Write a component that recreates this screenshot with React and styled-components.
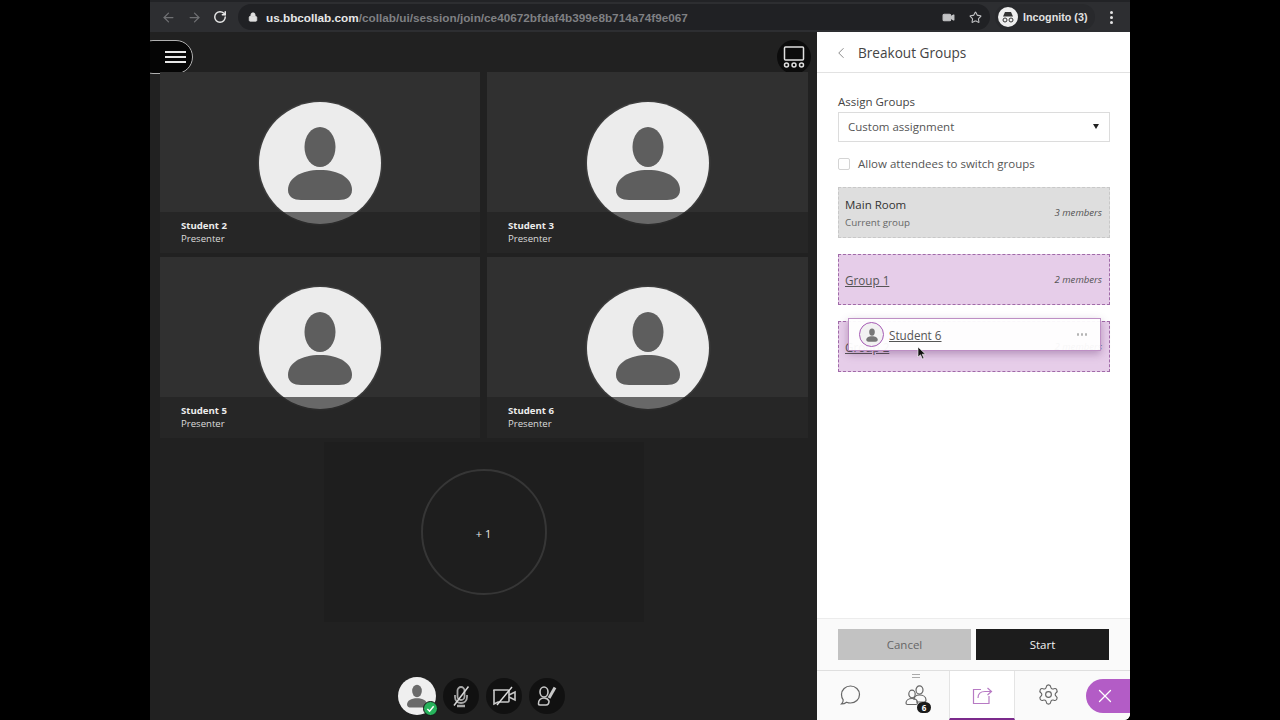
import React from 'react';
import styled, { createGlobalStyle } from 'styled-components';
import { ArrowLeft, ArrowRight, RotateCw, Lock, Video, Star, ChevronLeft, Settings, X } from 'lucide-react';

const Global = createGlobalStyle`
  html, body { margin: 0; padding: 0; background: #000; height: 100%; overflow: hidden; }
  #root { height: 100%; }
  * { box-sizing: border-box; }
  body { font-family: "Open Sans", "Liberation Sans", sans-serif; }
`;

const Stage = styled.div`
  width: 980px;
  height: 720px;
  margin: 0 auto;
  display: flex;
  flex-direction: column;
  background: #212121;
  border-bottom-right-radius: 6px;
  overflow: hidden;
`;

const BrowserBar = styled.div`
  height: 32px;
  flex: none;
  display: flex;
  align-items: center;
  padding: 0 0 0 5px;
  background: #2d2e31;
  border-top: 2px solid #222326;
  font-family: "Liberation Sans", sans-serif;
`;

const NavButton = styled.div`
  width: 26px;
  height: 26px;
  display: flex;
  align-items: center;
  justify-content: center;
  color: ${p => (p.$on ? '#e8e8e8' : '#6f7073')};
`;

const Omnibox = styled.div`
  margin-left: 5px;
  width: 752px;
  height: 26px;
  border-radius: 13px;
  background: #202124;
  display: flex;
  align-items: center;
  padding: 0 1px 0 10px;
  font-size: 11.75px;
  font-weight: 700;
  color: #7f8083;
  white-space: nowrap;
`;

const Host = styled.span`
  color: #e6e7e7;
`;

const Url = styled.div`
  margin-left: 8px;
  flex: 1;
`;

const OmniIcon = styled.div`
  width: 27px;
  display: flex;
  justify-content: center;
  color: #c2c3c5;
`;

const Chip = styled.div`
  margin-left: 5px;
  width: 100px;
  height: 26px;
  border-radius: 13px;
  background: #28292c;
  display: flex;
  align-items: center;
  gap: 5px;
  padding-left: 3px;
  font-size: 10.75px;
  font-weight: 700;
  color: #e2e2e2;
  white-space: nowrap;
`;

const ChipFace = styled.div`
  width: 20px;
  height: 20px;
  border-radius: 50%;
  background: #eeeeee;
  display: flex;
  align-items: center;
  justify-content: center;
`;

const Dots = styled.div`
  margin-left: 15px;
  display: flex;
  flex-direction: column;
  gap: 2px;
  span { width: 3px; height: 3px; border-radius: 50%; background: #e4e4e4; display: block; }
`;

const Body = styled.div`
  flex: 1;
  display: flex;
  min-height: 0;
`;

const Session = styled.div`
  position: relative;
  width: 667px;
  display: flex;
  flex-direction: column;
  padding: 40px 9px 5px 10px;
`;

const MenuButton = styled.div`
  position: absolute;
  left: -14px;
  top: 8px;
  width: 57px;
  height: 34px;
  border-radius: 17px;
  background: #050505;
  border: 1.5px solid #b0b0b0;
  display: flex;
  flex-direction: column;
  align-items: flex-end;
  justify-content: center;
  gap: 3px;
  padding-right: 6px;
  span { width: 21px; height: 2px; background: #e6e6e6; display: block; }
`;

const ViewButton = styled.div`
  position: absolute;
  left: 627px;
  top: 8px;
  width: 34px;
  height: 34px;
  border-radius: 50%;
  background: #0c0c0c;
  display: flex;
  align-items: center;
  justify-content: center;
`;

const TileGrid = styled.div`
  display: grid;
  grid-template-columns: 320px 321px;
  grid-auto-rows: 181px;
  column-gap: 7px;
  row-gap: 4px;
`;

const Tile = styled.div`
  position: relative;
  background: #303030;
  display: flex;
  justify-content: center;
  padding-top: 30px;
  overflow: hidden;
`;

const Avatar = styled.div`
  width: 122px;
  height: 122px;
  border-radius: 50%;
  background: #ececec;
  box-shadow: 0 0 0 1.5px #3d3d3d;
`;

const TileInfo = styled.div`
  position: absolute;
  left: 0;
  right: 0;
  bottom: 0;
  height: 41px;
  padding: 7px 0 0 21px;
  background: rgba(34, 34, 34, 0.65);
  color: #dcdcdc;
  font-size: 9.6px;
  line-height: 13px;
`;

const TileName = styled.div`
  font-weight: 700;
  color: #ececec;
`;

const OverflowRow = styled.div`
  display: flex;
  justify-content: center;
  margin-top: 4px;
  padding-right: 1px;
`;

const OverflowTile = styled.div`
  width: 320px;
  height: 180px;
  background: #1e1e1e;
  display: flex;
  align-items: center;
  justify-content: center;
`;

const OverflowCircle = styled.div`
  width: 126px;
  height: 126px;
  border-radius: 50%;
  border: 2px solid #363636;
  display: flex;
  align-items: center;
  justify-content: center;
  color: #e8e8e8;
  font-size: 11px;
  padding-top: 2px;
`;

const Controls = styled.div`
  margin-top: auto;
  display: flex;
  justify-content: center;
  align-items: center;
  gap: 7px;
  padding-right: 5px;
  height: 38px;
`;

const SelfButton = styled.div`
  position: relative;
  width: 38px;
  height: 38px;
  border-radius: 50%;
  background: #efefef;
  display: flex;
  align-items: center;
  justify-content: center;
`;

const Check = styled.div`
  position: absolute;
  right: -2px;
  bottom: -1px;
  width: 15px;
  height: 15px;
  border-radius: 50%;
  background: #27b35c;
  border: 1.5px solid #151515;
  display: flex;
  align-items: center;
  justify-content: center;
`;

const RoundButton = styled.div`
  width: 36px;
  height: 36px;
  border-radius: 50%;
  background: #111111;
  display: flex;
  align-items: center;
  justify-content: center;
`;

const Panel = styled.div`
  width: 313px;
  background: #fff;
  display: flex;
  flex-direction: column;
  color: #333;
`;

const PanelHeader = styled.div`
  height: 41px;
  flex: none;
  display: flex;
  align-items: center;
  gap: 8px;
  padding: 1px 0 0 15px;
  border-bottom: 1px solid #e2e2e2;
  font-size: 13.6px;
  font-weight: 500;
  color: #444;
`;

const PanelBody = styled.div`
  flex: 1;
  padding: 21px 20px 0 21px;
  position: relative;
`;

const FieldLabel = styled.div`
  font-size: 11.5px;
  font-weight: 500;
  line-height: 16px;
  color: #444;
`;

const SelectBox = styled.div`
  margin-top: 2px;
  height: 30px;
  border: 1px solid #dcdcdc;
  display: flex;
  align-items: center;
  justify-content: space-between;
  padding: 0 10px 1px 9px;
  font-size: 11.5px;
  color: #555;
`;

const Caret = styled.div`
  width: 0;
  height: 0;
  border-left: 3.5px solid transparent;
  border-right: 3.5px solid transparent;
  border-top: 5px solid #222;
`;

const CheckRow = styled.div`
  margin-top: 15px;
  display: flex;
  align-items: center;
  gap: 8px;
  font-size: 11.5px;
  line-height: 12px;
  color: #555;
  height: 14px;
`;

const CheckBox = styled.div`
  width: 12px;
  height: 12px;
  border: 1px solid #d4d4d4;
  border-radius: 2px;
`;

const Groups = styled.div`
  margin-top: 16px;
  display: flex;
  flex-direction: column;
  gap: 16px;
`;

const GroupCard = styled.div`
  height: 51px;
  border: 1px dashed ${p => (p.$tint ? '#a06aa8' : '#c8c8c8')};
  background: ${p => (p.$tint ? '#e6cde9' : '#dedede')};
  display: flex;
  align-items: center;
  justify-content: space-between;
  padding: 0 7px 0 6px;
`;

const GroupName = styled.div`
  font-size: 11.5px;
  font-weight: 500;
  line-height: 17px;
  margin-bottom: 3px;
  color: #333;
`;

const GroupNote = styled.div`
  font-size: 9.8px;
  line-height: 14px;
  color: #666;
`;

const GroupLink = styled.div`
  font-size: 11.7px;
  color: #555;
  text-decoration: underline;
`;

const Members = styled.div`
  font-size: 9.6px;
  font-style: italic;
  color: #555;
`;

const DragCard = styled.div`
  position: absolute;
  left: 31px;
  top: 245px;
  width: 253px;
  height: 33px;
  background: rgba(255, 255, 255, 0.95);
  border: 1px solid #bd8fc4;
  box-shadow: 0 3px 8px rgba(90, 40, 100, 0.35);
  display: flex;
  align-items: center;
  padding: 0 13px 0 10px;
  gap: 5px;
`;

const DragAvatar = styled.div`
  width: 25px;
  height: 25px;
  border-radius: 50%;
  border: 1.5px solid #a65bb5;
  display: flex;
  align-items: center;
  justify-content: center;
  background: #f2f2f2;
`;

const DragName = styled.div`
  flex: 1;
  font-size: 11.7px;
  font-weight: 500;
  color: #555;
  text-decoration: underline;
`;

const MoreDots = styled.div`
  display: flex;
  gap: 1.5px;
  span { width: 2.5px; height: 2.5px; border-radius: 50%; background: #b4b4b4; display: block; }
`;

const Cursor = styled.svg`
  position: absolute;
  left: 100px;
  top: 273px;
`;

const Footer = styled.div`
  flex: none;
  height: 53px;
  background: #fafafa;
  border-top: 1px solid #ececec;
  border-bottom: 1px solid #dfdfdf;
  display: flex;
  gap: 5px;
  padding: 10px 21px 0 21px;
`;

const FootButton = styled.div`
  width: 133px;
  height: 31px;
  display: flex;
  align-items: center;
  justify-content: center;
  font-size: 11.5px;
  font-weight: 500;
  background: ${p => (p.$dark ? '#1c1c1c' : '#c2c2c2')};
  color: ${p => (p.$dark ? '#f2f2f2' : '#666')};
`;

const Tabs = styled.div`
  flex: none;
  height: 49px;
  display: flex;
  align-items: stretch;
  background: #fafafa;
`;

const Tab = styled.div`
  position: relative;
  width: 66px;
  display: flex;
  align-items: center;
  justify-content: center;
  padding-bottom: 2px;
  ${p => p.$active && `
    background: #fff;
    border-left: 1px solid #e4e4e4;
    border-right: 1px solid #e4e4e4;
    border-bottom: 2px solid #7b2a8c;
    padding-bottom: 0;
  `}
`;

const Grip = styled.div`
  position: absolute;
  top: 3px;
  left: 50%;
  margin-left: -4px;
  width: 8px;
  height: 4px;
  border-top: 1px solid #aaa;
  border-bottom: 1px solid #aaa;
`;

const Count = styled.div`
  position: absolute;
  left: 34px;
  top: 31px;
  width: 14px;
  height: 11px;
  border-radius: 6px;
  background: #1a1a1a;
  color: #fff;
  font-size: 8px;
  font-weight: 700;
  line-height: 11px;
  text-align: center;
`;

const CloseTab = styled.div`
  margin: 8px 0 7px auto;
  width: 44px;
  height: 34px;
  border-radius: 17px 0 0 17px;
  background: #b35cc6;
  color: #fff;
  display: flex;
  align-items: center;
  justify-content: center;
  padding-right: 6px;
`;

const Person = ({ size = 122, fill = '#5e5e5e' }) => (
  <svg width={size} height={size} viewBox="0 0 122 122">
    <ellipse cx="61" cy="45" rx="15.5" ry="20" fill={fill} />
    <path d="M61 68C80 68 93 76 93 88C93 95 87 98 80 98H42C35 98 29 95 29 88C29 76 42 68 61 68Z" fill={fill} />
  </svg>
);

const tiles = [
  { name: 'Student 2' },
  { name: 'Student 3' },
  { name: 'Student 5' },
  { name: 'Student 6' },
];

export default function App() {
  return (
    <>
      <Global />
      <Stage>
        <BrowserBar>
          <NavButton><ArrowLeft size={15} /></NavButton>
          <NavButton><ArrowRight size={15} /></NavButton>
          <NavButton $on><RotateCw size={14} strokeWidth={2.5} /></NavButton>
          <Omnibox>
            <Lock size={10} fill="#e0e0e0" color="#e0e0e0" />
            <Url><Host>us.bbcollab.com</Host>/collab/ui/session/join/ce40672bfdaf4b399e8b714a74f9e067</Url>
            <OmniIcon><Video size={13} fill="#c2c3c5" /></OmniIcon>
            <OmniIcon><Star size={13} strokeWidth={2} /></OmniIcon>
          </Omnibox>
          <Chip>
            <ChipFace>
              <svg width="16" height="16" viewBox="0 0 16 16">
                <path d="M3 7.5L5 3H11L13 7.5Z" fill="#333" />
                <circle cx="5" cy="11" r="2" fill="none" stroke="#333" />
                <circle cx="11" cy="11" r="2" fill="none" stroke="#333" />
              </svg>
            </ChipFace>
            Incognito (3)
          </Chip>
          <Dots><span /><span /><span /></Dots>
        </BrowserBar>
        <Body>
          <Session>
            <MenuButton><span /><span /><span /></MenuButton>
            <ViewButton>
              <svg width="24" height="24" viewBox="0 0 24 24" fill="none" stroke="#e0e0e0" strokeWidth="1.5">
                <rect x="2.5" y="2" width="19" height="13" rx="1" />
                <circle cx="4.5" cy="20" r="2" />
                <circle cx="12" cy="20" r="2" />
                <circle cx="19.5" cy="20" r="2" />
              </svg>
            </ViewButton>
            <TileGrid>
              {tiles.map(t => (
                <Tile key={t.name}>
                  <Avatar><Person /></Avatar>
                  <TileInfo>
                    <TileName>{t.name}</TileName>
                    Presenter
                  </TileInfo>
                </Tile>
              ))}
            </TileGrid>
            <OverflowRow>
              <OverflowTile>
                <OverflowCircle>+ 1</OverflowCircle>
              </OverflowTile>
            </OverflowRow>
            <Controls>
              <SelfButton>
                <Person size={38} fill="#6a6a6a" />
                <Check>
                  <svg width="9" height="9" viewBox="0 0 10 10" fill="none" stroke="#fff" strokeWidth="1.6">
                    <path d="M1.5 5.5L4 8L8.5 2.5" />
                  </svg>
                </Check>
              </SelfButton>
              <RoundButton>
                <svg width="24" height="24" viewBox="0 0 24 24" fill="none" stroke="#a8a8a8" strokeWidth="1.8">
                  <rect x="8.5" y="3" width="7" height="13" rx="3.5" />
                  <path d="M6 11V13C6 17 9 19 12 19C15 19 18 17 18 13V11" />
                  <path d="M8 22H16" strokeWidth="2.5" />
                  <path d="M19.5 2.5L5 21.5" stroke="#d8d8d8" strokeWidth="1.5" />
                </svg>
              </RoundButton>
              <RoundButton>
                <svg width="26" height="24" viewBox="0 0 26 24" fill="none" stroke="#c8c8c8" strokeWidth="1.6">
                  <path d="M3 6H17C17.6 6 18 6.4 18 7V17C18 17.6 17.6 18 17 18H7L3 20V7C3 6.4 2.4 6 3 6Z" />
                  <path d="M18 11L24 8V16L18 13" />
                  <path d="M21 3L6 21" stroke="#e0e0e0" strokeWidth="1.4" />
                </svg>
              </RoundButton>
              <RoundButton>
                <svg width="24" height="24" viewBox="0 0 24 24" fill="none" stroke="#c8c8c8" strokeWidth="1.6">
                  <ellipse cx="9" cy="8" rx="4" ry="5" />
                  <path d="M3.5 20C3 16 6 14 9 14C11 14 13 15 14 17C14 20 13 21 11 21H5C4 21 3.6 20.6 3.5 20Z" />
                  <path d="M14 14L20 3.5" strokeWidth="3" />
                </svg>
              </RoundButton>
            </Controls>
          </Session>
          <Panel>
            <PanelHeader>
              <ChevronLeft size={18} color="#888" strokeWidth={1.3} />
              Breakout Groups
            </PanelHeader>
            <PanelBody>
              <FieldLabel>Assign Groups</FieldLabel>
              <SelectBox>Custom assignment<Caret /></SelectBox>
              <CheckRow><CheckBox />Allow attendees to switch groups</CheckRow>
              <Groups>
                <GroupCard>
                  <div>
                    <GroupName>Main Room</GroupName>
                    <GroupNote>Current group</GroupNote>
                  </div>
                  <Members>3 members</Members>
                </GroupCard>
                <GroupCard $tint>
                  <GroupLink>Group 1</GroupLink>
                  <Members>2 members</Members>
                </GroupCard>
                <GroupCard $tint>
                  <GroupLink>Group 2</GroupLink>
                  <Members>2 members</Members>
                </GroupCard>
              </Groups>
              <DragCard>
                <DragAvatar><Person size={22} fill="#777" /></DragAvatar>
                <DragName>Student 6</DragName>
                <MoreDots><span /><span /><span /></MoreDots>
              </DragCard>
              <Cursor width="10" height="14" viewBox="0 0 10 14">
                <path d="M1 1V11L3.5 8.8L5.5 13L7 12.3L5.2 8.2H8.5Z" fill="#111" stroke="#fff" strokeWidth="0.6" />
              </Cursor>
            </PanelBody>
            <Footer>
              <FootButton>Cancel</FootButton>
              <FootButton $dark>Start</FootButton>
            </Footer>
            <Tabs>
              <Tab>
                <svg width="24" height="24" viewBox="0 0 24 24" fill="none" stroke="#666" strokeWidth="1.2">
                  <path d="M12.5 3C17.5 3 21.5 6.8 21.5 11.5C21.5 16.2 17.5 20 12.5 20C11 20 9.8 19.7 8.6 19.2C7 20.4 5.2 21 3.5 21C4.8 19.8 5.3 18.5 5.2 16.8C4 15.4 3.5 13.5 3.5 11.5C3.5 6.8 7.5 3 12.5 3Z" />
                </svg>
              </Tab>
              <Tab>
                <Grip />
                <svg width="24" height="24" viewBox="0 0 24 24" fill="none" stroke="#666" strokeWidth="1.2">
                  <ellipse cx="15.5" cy="7" rx="3.5" ry="4.2" />
                  <path d="M10 17C10 13.5 12.5 12 15.5 12C18.5 12 22 13.5 22 17C22 18.5 21 19 20 19H12" />
                  <ellipse cx="8" cy="11" rx="3.2" ry="3.8" />
                  <path d="M2 20C2 17 5 15.5 8 15.5C11 15.5 13.5 17 13.5 20C13.5 21 13 21.5 12 21.5H3.5C2.5 21.5 2 21 2 20Z" />
                </svg>
                <Count>6</Count>
              </Tab>
              <Tab $active>
                <svg width="24" height="24" viewBox="0 0 24 24" fill="none" stroke="#b77ac4" strokeWidth="1.2">
                  <path d="M19 13V20.5H3.5V6.5H11" />
                  <path d="M8 15C8 11 10.5 8.5 15 8.5H21" />
                  <path d="M17.5 5L21.5 8.5L17.5 12" />
                </svg>
              </Tab>
              <Tab>
                <Settings size={23} color="#666" strokeWidth={1.2} />
              </Tab>
              <CloseTab><X size={22} strokeWidth={1.4} /></CloseTab>
            </Tabs>
          </Panel>
        </Body>
      </Stage>
    </>
  );
}
